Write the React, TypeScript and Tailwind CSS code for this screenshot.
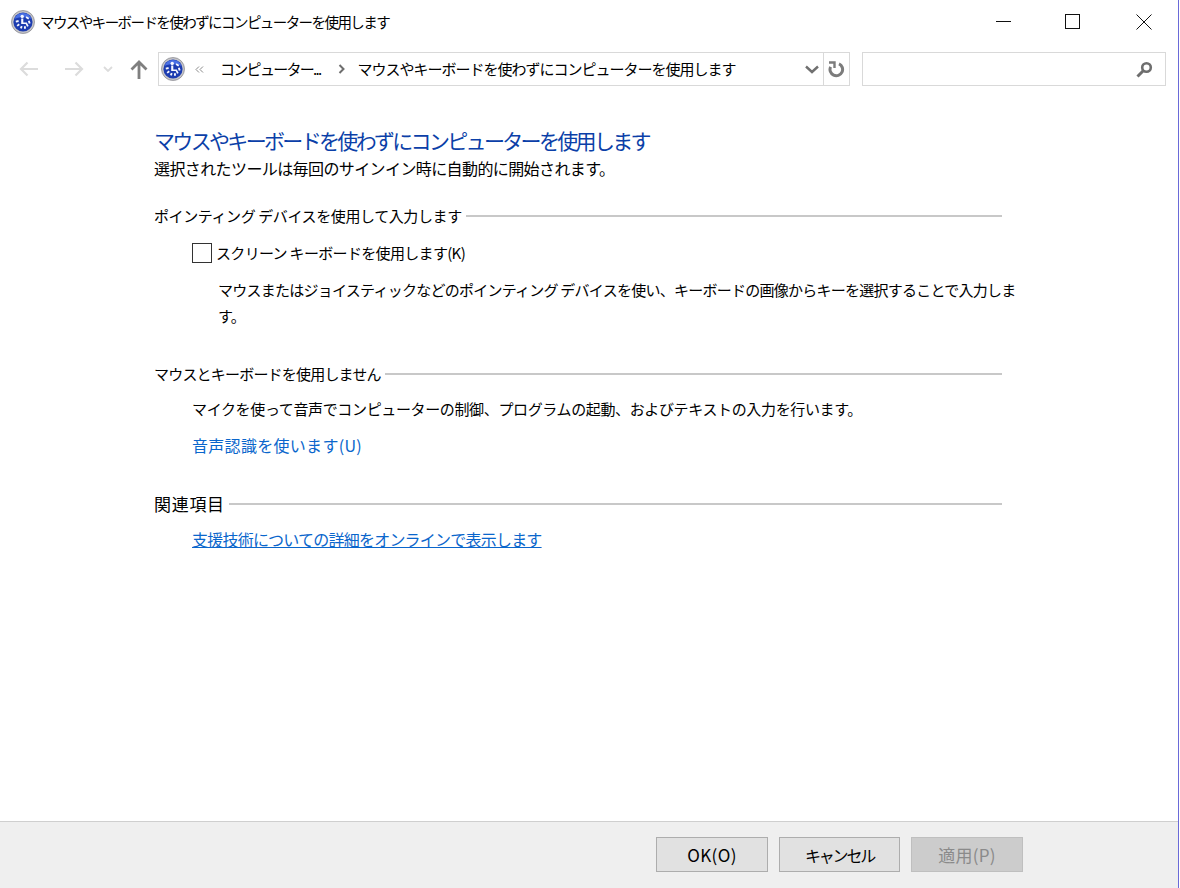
const F = '"Noto Sans CJK JP", "Liberation Sans", sans-serif';

function EaseIcon({ size }: { size: number }) {
  return (
    <svg width={size} height={size} viewBox="0 0 24 24" className="shrink-0">
      <circle cx="12" cy="12" r="11.5" fill="#c4c4c8" />
      <circle cx="12" cy="12" r="11.5" fill="none" stroke="#85858c" strokeWidth="0.7" />
      <circle cx="12" cy="12" r="9.6" fill="#1c3cb0" />
      <path d="M3.500 9a9 9 0 0 1 17 0c-3.500-2.500-13.500-2.500-17 0z" fill="#4a70e4" />
      <g fill="#f7f8ff">
        <circle cx="11.200" cy="6.400" r="1.700" />
        <path d="M10.200 8.600h2.100v3.800h3.500l1.900 3.700-1.600.7-1.400-2.700h-4.500z" />
        <path d="M15.600 6.200l2.600 1.700-1 1.500-2.600-1.700zM18.700 10.400l.9 2.800-1.800.6-.9-2.800z" />
        <path d="M4.600 10.800l2.800-.7.4 1.800-2.800.7zM5.600 15.200l2.100-1.600 1.100 1.400-2.100 1.600zM9 18l.9-2.300 1.700.7-.9 2.300zM13 18.700v-2.400h1.900v2.400z" />
      </g>
    </svg>
  );
}

function Section({ title, titleClass, children }: { title: string; titleClass: string; children: React.ReactNode }) {
  return (
    <section>
      <div className="flex items-center h-[22px]">
        <span className={`${titleClass} text-black whitespace-nowrap`}>{title}</span>
        <div className="flex-1 h-[2px] bg-[#c8c8c8] ml-[4px]" />
      </div>
      {children}
    </section>
  );
}

function Button({ w, label, textClass, disabled }: { w: string; label: string; textClass: string; disabled?: boolean }) {
  return (
    <button
      className={`${w} h-[35px] border ${textClass} ${
        disabled ? 'bg-[#cccccc] border-[#bfbfbf] text-[#8a8a8a]' : 'bg-[#e1e1e1] border-[#adadad] text-black'
      }`}
    >
      {label}
    </button>
  );
}

export default function App() {
  return (
    <div className="w-[1179px] h-[888px] flex flex-col bg-white border-r border-[#6a6ad8] overflow-hidden" style={{ fontFamily: F }}>
      <header className="h-[44px] flex items-center pl-[11px] shrink-0">
        <EaseIcon size={24} />
        <span className="ml-[5px] text-[14.500px] tracking-[-1.570px] text-black whitespace-nowrap">マウスやキーボードを使わずにコンピューターを使用します</span>
        <div className="ml-auto flex items-center pr-[26px]">
          <svg width="16" height="16" viewBox="0 0 16 16"><path d="M0 7.500h15" stroke="#111" strokeWidth="1" /></svg>
          <svg width="16" height="16" viewBox="0 0 16 16" className="ml-[53px]"><rect x="0.500" y="0.500" width="14" height="14" fill="none" stroke="#111" /></svg>
          <svg width="16" height="16" viewBox="0 0 16 16" className="ml-[55px]"><path d="M0.500 0.500l15 15M15.500 0.500l-15 15" stroke="#111" strokeWidth="1" /></svg>
        </div>
      </header>

      <nav className="h-[34px] mt-[8px] flex items-center shrink-0 pl-[19px]">
        <svg width="20" height="16" viewBox="0 0 20 16" fill="none" stroke="#dcdcdc" strokeWidth="2.200"><path d="M19 8H2M8.500 1.500L2 8l6.500 6.500" /></svg>
        <svg width="20" height="16" viewBox="0 0 20 16" fill="none" stroke="#dcdcdc" strokeWidth="2.200" className="ml-[25px]"><path d="M1 8h17M11.500 1.500L18 8l-6.500 6.500" /></svg>
        <svg width="10" height="6" viewBox="0 0 10 6" fill="none" stroke="#dcdcdc" strokeWidth="1.800" className="ml-[19px]"><path d="M1 1l4 4 4-4" /></svg>
        <svg width="18" height="19" viewBox="0 0 18 19" fill="none" stroke="#7f7f7f" strokeWidth="2.800" className="ml-[17px]"><path d="M9 19V2M1.500 9.500L9 2l7.500 7.500" /></svg>
        <div className="ml-[10px] w-[692px] h-[34px] border border-[#d9d9d9] flex items-center">
          <div className="ml-[2px]"><EaseIcon size={24} /></div>
          <svg width="9" height="7" viewBox="0 0 9 7" fill="none" stroke="#8a8a8a" strokeWidth="1" className="ml-[10px]"><path d="M4 .5L1 3.500 4 6.500M8 .5L5 3.500 8 6.500" /></svg>
          <span className="ml-[16px] text-[15px] tracking-[-1.700px] text-black whitespace-nowrap">コンピューター...</span>
          <svg width="8" height="10" viewBox="0 0 8 10" fill="none" stroke="#6e6e6e" strokeWidth="2" className="ml-[17px]"><path d="M1.500 1l4 4-4 4" /></svg>
          <span className="ml-[12px] text-[15px] tracking-[-1px] text-black whitespace-nowrap">マウスやキーボードを使わずにコンピューターを使用します</span>
          <svg width="14" height="9" viewBox="0 0 14 9" fill="none" stroke="#707070" strokeWidth="2.400" className="ml-auto mr-[4px]"><path d="M1 1.500l6 5.500 6-5.500" /></svg>
          <div className="w-[26px] h-full border-l border-[#d9d9d9] flex items-center justify-center">
            <svg width="17" height="17" viewBox="0 0 17 17" fill="none" stroke="#7c7c7c" strokeWidth="3">
              <path d="M11 2.800a6.300 6.300 0 1 1-8.400 3" />
              <path d="M1 1.500h5.500V7" strokeWidth="2.400" />
            </svg>
          </div>
        </div>
        <div className="ml-[12px] w-[304px] h-[34px] border border-[#d9d9d9] flex items-center justify-end pr-[12px]">
          <svg width="17" height="17" viewBox="0 0 17 17" fill="none" stroke="#6e6e6e"><circle cx="10.500" cy="6.500" r="4.300" strokeWidth="2.600" /><path d="M7.500 9.500l-6 6" strokeWidth="3" /></svg>
        </div>
      </nav>

      <main className="flex-1 pl-[154px] pr-[176px] pt-[39px] text-black">
        <h1 className="text-[21px] leading-[30px] tracking-[-2.670px] text-[#0b3fa8] font-normal whitespace-nowrap">マウスやキーボードを使わずにコンピューターを使用します</h1>
        <p className="text-[16px] leading-[20px] tracking-[-0.600px] mt-[3px] whitespace-nowrap">選択されたツールは毎回のサインイン時に自動的に開始されます。</p>

        <div className="mt-[27px]">
          <Section title="ポインティング デバイスを使用して入力します" titleClass="text-[15px] tracking-[-0.400px]">
            <label className="flex items-center mt-[15px] ml-[38px] h-[22px]">
              <span className="w-[20px] h-[20px] border border-[#333] bg-white shrink-0" />
              <span className="ml-[4px] text-[15px] tracking-[-0.670px] whitespace-nowrap">スクリーン キーボードを使用します(K)</span>
            </label>
            <p className="ml-[64px] w-[800px] mt-[13px] text-[15px] leading-[26px] tracking-[-0.750px]">
              マウスまたはジョイスティックなどのポインティング デバイスを使い、キーボードの画像からキーを選択することで入力します。
            </p>
          </Section>
        </div>

        <div className="mt-[34px]">
          <Section title="マウスとキーボードを使用しません" titleClass="text-[15px] tracking-[-0.800px]">
            <p className="ml-[38px] mt-[13px] text-[15px] leading-[22px] tracking-[-0.360px] whitespace-nowrap">マイクを使って音声でコンピューターの制御、プログラムの起動、およびテキストの入力を行います。</p>
            <p className="ml-[38px] mt-[14px] text-[16px] leading-[22px] tracking-[0.300px] text-[#0a66cc] whitespace-nowrap">音声認識を使います(U)</p>
          </Section>
        </div>

        <div className="mt-[37px]">
          <Section title="関連項目" titleClass="text-[17px] tracking-[0.700px] leading-[20px]">
            <p className="ml-[38px] mt-[13px] text-[16px] leading-[22px] tracking-[-0.780px] text-[#0a66cc] underline whitespace-nowrap">支援技術についての詳細をオンラインで表示します</p>
          </Section>
        </div>
      </main>

      <footer className="h-[67px] shrink-0 bg-[#efefef] border-t border-[#cfcfcf] flex items-start pt-[15px] pl-[656px] gap-[11px]">
        <Button w="w-[112px]" label="OK(O)" textClass="text-[17px] tracking-[0.400px]" />
        <Button w="w-[121px]" label="キャンセル" textClass="text-[16px] tracking-[-2.200px]" />
        <Button w="w-[112px]" label="適用(P)" textClass="text-[17px] tracking-[0.200px]" disabled />
      </footer>
    </div>
  );
}
